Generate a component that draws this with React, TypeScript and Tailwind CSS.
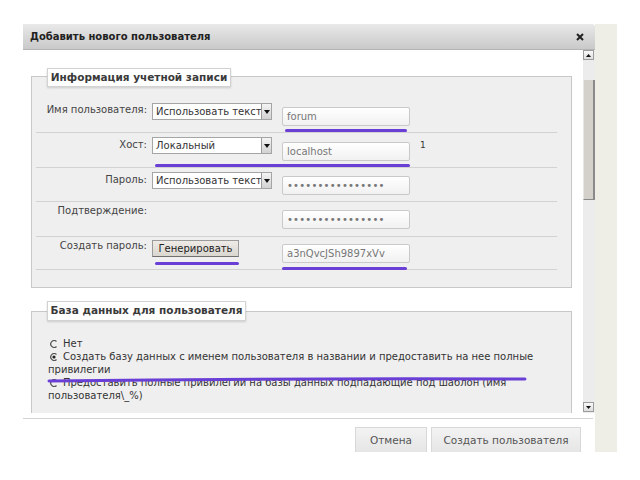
import type { ReactNode } from 'react';

const Mark = ({ className }: { className: string }) => (
    <div className={`absolute h-[3px] rounded-full bg-[#6a3fd6] ${className}`}></div>
);

const Select = ({ value, className = '' }: { value: string; className?: string }) => (
    <div className={`relative w-[120px] h-[17px] bg-white border border-[#a5a5a5] overflow-hidden ${className}`}>
        <div className="pl-[3px] leading-[15px] whitespace-nowrap text-[#333]">{value}</div>
        <div className="absolute right-0 top-0 w-[10px] h-[15px] bg-gradient-to-b from-[#f4f4f4] to-[#d2d2d2] border-l border-[#9a9a9a] flex items-center justify-center">
            <svg width="6" height="4" viewBox="0 0 6 4">
                <path d="M0 0 H6 L3 4 Z" fill="#111" />
            </svg>
        </div>
    </div>
);

const Field = ({ children, className = '' }: { children: ReactNode; className?: string }) => (
    <div className={`w-[128px] h-[19px] rounded-[2px] border border-[#c9c9c9] bg-gradient-to-b from-white to-[#f1f1f1] pl-[4px] leading-[17px] text-[#777] whitespace-nowrap overflow-hidden ${className}`}>
        {children}
    </div>
);

const Row = ({ label, labelTop, h, children }: { label: string; labelTop: string; h: string; children: ReactNode }) => (
    <div className={`relative flex items-start border-b border-[#d2d2d2] ${h}`}>
        <div className={`w-[111px] text-right leading-[12px] text-[#444] ${labelTop}`}>{label}</div>
        {children}
    </div>
);

const Radio = ({ checked }: { checked?: boolean }) => (
    <svg width="8" height="8" viewBox="0 0 8 8" className="inline-block ml-[2px] mr-[5px]">
        <path d="M6.5 1.5 A3.4 3.4 0 1 0 6.5 6.5" fill="none" stroke="#555" strokeWidth="1.2" />
        {checked && <circle cx="4" cy="4" r="1.6" fill="#222" />}
    </svg>
);

const ScrollArrow = ({ up }: { up?: boolean }) => (
    <div className="w-[11px] h-[10px] bg-gradient-to-b from-[#fafafa] to-[#dedede] border border-[#9c9c9c] flex items-center justify-center">
        <svg width="5" height="3" viewBox="0 0 5 3">
            <path d={up ? 'M0 3 H5 L2.5 0 Z' : 'M0 0 H5 L2.5 3 Z'} fill="#111" />
        </svg>
    </div>
);

const App = () => {
    return (
        <div className="w-[640px] h-[480px] bg-white pt-[24px] pl-[23px] font-['DejaVu_Sans',Verdana,sans-serif] text-[10px] text-[#333]">
            <div className="flex items-start">
                <div className="w-[572px] h-[428px] overflow-hidden flex flex-col bg-white">
                    {/* title bar */}
                    <div className="h-[26px] shrink-0 flex items-center justify-between pl-[7px] pr-[11px] bg-gradient-to-b from-[#e9e9e9] to-[#c9c9c9] border-b border-[#b5b5b5] rounded-tr-[3px]">
                        <span className="font-bold text-[10px] text-[#222]">Добавить нового пользователя</span>
                        <svg width="8" height="8" viewBox="0 0 8 8">
                            <path d="M1 1 L7 7 M7 1 L1 7" stroke="#222" strokeWidth="2" />
                        </svg>
                    </div>

                    <div className="flex h-[363px] shrink-0">
                        <div className="w-[560px] h-full overflow-hidden pt-[26px] pl-[8px]">
                            {/* account info */}
                            <div className="w-[541px] border border-[#c8c8c8] bg-[#efefef] pb-[17px]">
                                <div className="-mt-[9px] ml-[15px] w-[184px] h-[19px] bg-white border border-[#d2d2d2] shadow-[0_1px_2px_rgba(0,0,0,0.15)] flex items-center justify-center font-bold text-[10.5px] text-[#3a3a3a]">
                                    Информация учетной записи
                                </div>
                                <div className="mt-[11px] ml-[4px] w-[521px]">
                                    <Row label="Имя пользователя:" labelTop="pt-[6px]" h="h-[35px]">
                                        <Select value="Использовать текст" className="ml-[5px] mt-[5px]" />
                                        <Field className="ml-[10px] mt-[9px]">forum</Field>
                                        <Mark className="left-[249px] top-[31px] w-[122px]" />
                                    </Row>
                                    <Row label="Хост:" labelTop="pt-[6px]" h="h-[35px]">
                                        <Select value="Локальный" className="ml-[5px] mt-[4px]" />
                                        <Field className="ml-[10px] mt-[9px]">localhost</Field>
                                        <span className="ml-[10px] mt-[6px] text-[9px] text-[#333]">1</span>
                                        <Mark className="left-[119px] top-[31px] w-[255px]" />
                                    </Row>
                                    <Row label="Пароль:" labelTop="pt-[6px]" h="h-[34px]">
                                        <Select value="Использовать текст" className="ml-[5px] mt-[4px]" />
                                        <Field className="ml-[10px] mt-[8px] text-[#444] tracking-[0.2px]">••••••••••••••••</Field>
                                    </Row>
                                    <Row label="Подтверждение:" labelTop="pt-[3px]" h="h-[35px]">
                                        <div className="w-[120px] ml-[5px]"></div>
                                        <Field className="ml-[10px] mt-[8px] text-[#444] tracking-[0.2px]">••••••••••••••••</Field>
                                    </Row>
                                    <Row label="Создать пароль:" labelTop="pt-[3px]" h="h-[33px]">
                                        <div className="w-[120px] ml-[5px] mt-[3px]">
                                            <button className="w-[87px] h-[17px] bg-gradient-to-b from-[#efece8] to-[#d9d6d0] border border-[#9b9b9b] border-b-[#6f6f6f] text-[#222] leading-[15px]">
                                                Генерировать
                                            </button>
                                        </div>
                                        <Field className="ml-[10px] mt-[7px]">a3nQvcJSh9897xVv</Field>
                                        <Mark className="left-[119px] top-[25px] w-[84px]" />
                                        <Mark className="left-[246px] top-[30px] w-[125px]" />
                                    </Row>
                                </div>
                            </div>

                            {/* database */}
                            <div className="relative mt-[23px] w-[541px] h-[140px] border border-[#c8c8c8] bg-[#efefef]">
                                <div className="-mt-[11px] ml-[15px] w-[199px] h-[20px] bg-white border border-[#d2d2d2] shadow-[0_1px_2px_rgba(0,0,0,0.15)] flex items-center justify-center font-bold text-[10.5px] text-[#3a3a3a]">
                                    База данных для пользователя
                                </div>
                                <div className="mt-[16px] ml-[16px] w-[509px] leading-[13px] text-[#333]">
                                    <div><Radio />Нет</div>
                                    <div><Radio checked />Создать базу данных с именем пользователя в названии и предоставить на нее полные привилегии</div>
                                    <div><Radio />Предоставить полные привилегии на базы данных подпадающие под шаблон (имя пользователя\_%)</div>
                                </div>
                                <svg className="absolute left-[15px] top-[64px]" width="482" height="8" viewBox="0 0 482 8">
                                    <path d="M2 5 Q 240 2 478 3" fill="none" stroke="#6a3fd6" strokeWidth="3" strokeLinecap="round" />
                                </svg>
                            </div>
                        </div>

                        {/* scrollbar */}
                        <div className="w-[12px] h-full bg-[#ececec] flex flex-col">
                            <ScrollArrow up />
                            <div className="h-[20px]"></div>
                            <div className="h-[120px] w-[12px] bg-[#d4d1cb] border-l border-[#e8e6e2] border-r-2 border-r-[#8a8a8a] border-b border-b-[#8a8a8a]"></div>
                            <div className="flex-1"></div>
                            <ScrollArrow />
                            <div className="h-[1px]"></div>
                        </div>
                    </div>

                    <div className="h-[5px] shrink-0"></div>
                    <div className="flex-1 border-t border-[#d3d3d3] mr-[2px] flex justify-end items-start gap-[4px] pt-[8px] pr-[12px]">
                        <button className="w-[72px] h-[30px] bg-gradient-to-b from-[#f3f3f3] to-[#e3e3e3] border border-[#d8d8d8] text-[#555] text-[10.5px] leading-[12px] pb-[4px]">
                            Отмена
                        </button>
                        <button className="w-[150px] h-[30px] bg-gradient-to-b from-[#f3f3f3] to-[#e3e3e3] border border-[#d8d8d8] text-[#555] text-[10.5px] leading-[12px] pb-[4px]">
                            Создать пользователя
                        </button>
                    </div>
                </div>
                <div className="w-[22px] h-[428px] bg-[#efeee6]"></div>
            </div>
        </div>
    );
};

export default App;
